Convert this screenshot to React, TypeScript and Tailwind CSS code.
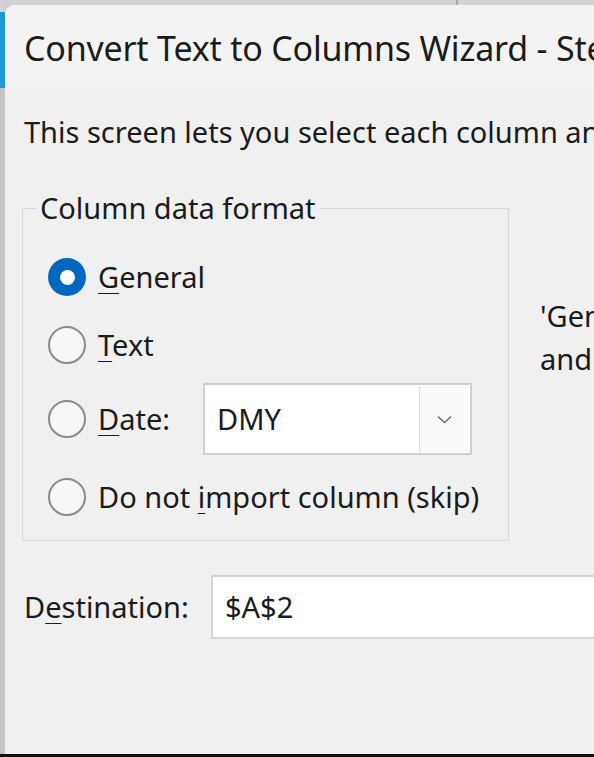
import React, { useState } from 'react';

const FONT = { fontFamily: '"Noto Sans", "Open Sans", sans-serif' };

// Mnemonic letter, underlined like a Windows access key
const Key = ({ children }: { children: React.ReactNode }) => (
  <span className="underline decoration-1 underline-offset-[5px]">{children}</span>
);

interface RadioProps {
  checked: boolean;
  onSelect: () => void;
  children: React.ReactNode;
}

const Radio: React.FC<RadioProps> = ({ checked, onSelect, children }) => (
  <button type="button" onClick={onSelect} className="flex items-center gap-[12px] text-left">
    {checked ? (
      <span className="w-[38px] h-[38px] rounded-full bg-[#0067c0] flex items-center justify-center shrink-0">
        <span className="w-[15px] h-[15px] rounded-full bg-white" />
      </span>
    ) : (
      <span className="w-[38px] h-[38px] rounded-full border-2 border-[#8b8b8b] bg-[#f6f6f6] shrink-0" />
    )}
    <span>{children}</span>
  </button>
);

const App: React.FC = () => {
  const [format, setFormat] = useState('general');

  return (
    <div className="w-[594px] h-[757px] bg-[#cdcdcd] flex flex-col overflow-hidden text-[#1b1b1b]" style={FONT}>
      {/* strip of the window behind */}
      <div className="h-[5px] flex bg-[#d2d2d2] shrink-0">
        <div className="w-[456px]" />
        <div className="w-[2px] bg-[#a8a8a8]" />
      </div>

      <div className="flex flex-1 min-h-0">
        <div className="w-[5px] flex flex-col shrink-0">
          <div className="h-[7px] bg-[#d2d2d2]" />
          <div className="h-[76px] bg-[#1e9ad8]" />
          <div className="flex-1 bg-[#c4c4c4]" />
        </div>

        <div className="flex-1 flex flex-col rounded-tl-[9px] overflow-hidden bg-[#f0f0f0]">
          {/* title bar */}
          <div className="h-[83px] shrink-0 bg-[#f3f3f3] flex items-center pl-[19px] pt-[3px] whitespace-nowrap text-[34px] tracking-[-0.2px]">
            Convert Text to Columns Wizard - Step 3 of 3
          </div>

          <div className="flex-1 flex flex-col pl-[19px] text-[29px]">
            <p className="pt-[24px] leading-[40px] whitespace-nowrap">
              This screen lets you select each column and set the Data Format.
            </p>

            <div className="flex mt-[38px]">
              <fieldset className="w-[487px] shrink-0 ml-[-2px] border border-[#d9d9d9] pl-[25px] pt-[17px] pb-[5px]">
                <legend className="ml-[-11px] px-[3px] leading-[36px]">Column data format</legend>

                <div className="h-[68px] flex items-center">
                  <Radio checked={format === 'general'} onSelect={() => setFormat('general')}>
                    <Key>G</Key>eneral
                  </Radio>
                </div>
                <div className="h-[68px] flex items-center">
                  <Radio checked={format === 'text'} onSelect={() => setFormat('text')}>
                    <Key>T</Key>ext
                  </Radio>
                </div>
                <div className="h-[80px] flex items-center">
                  <Radio checked={format === 'date'} onSelect={() => setFormat('date')}>
                    <span className="inline-block w-[105px]">
                      <Key>D</Key>ate:
                    </span>
                  </Radio>
                  <div className="w-[269px] h-[72px] bg-white border-2 border-[#cfcfcf] flex">
                    <div className="flex-1 flex items-center pl-[12px]">DMY</div>
                    <div className="w-[50px] my-[1px] mr-[1px] bg-[#fafafa] border-l border-[#dddddd] flex items-center justify-center">
                      <svg width="15" height="9" viewBox="0 0 15 9" fill="none">
                        <path d="M1 1.5 L7.5 7.5 L14 1.5" stroke="#6a6a6a" strokeWidth="1.4" />
                      </svg>
                    </div>
                  </div>
                </div>
                <div className="h-[76px] flex items-center">
                  <Radio checked={format === 'skip'} onSelect={() => setFormat('skip')}>
                    Do not <Key>i</Key>mport column (skip)
                  </Radio>
                </div>
              </fieldset>

              <div className="pl-[31px] pt-[104px] leading-[43px] whitespace-nowrap">
                <p>'General' converts numeric values to numbers, date values to dates,</p>
                <p>and all remaining values to text.</p>
              </div>
            </div>

            <div className="flex items-center mt-[34px]">
              <span className="w-[187px] shrink-0">
                D<Key>e</Key>stination:
              </span>
              <div className="flex-1 h-[64px] bg-white border-2 border-r-0 border-[#d4d4d4] flex items-center pl-[12px]">
                $A$2
              </div>
            </div>

            <div className="flex-1" />
          </div>
        </div>
      </div>
      <div className="h-[3px] bg-[#111111] shrink-0" />
    </div>
  );
};

export default App;
